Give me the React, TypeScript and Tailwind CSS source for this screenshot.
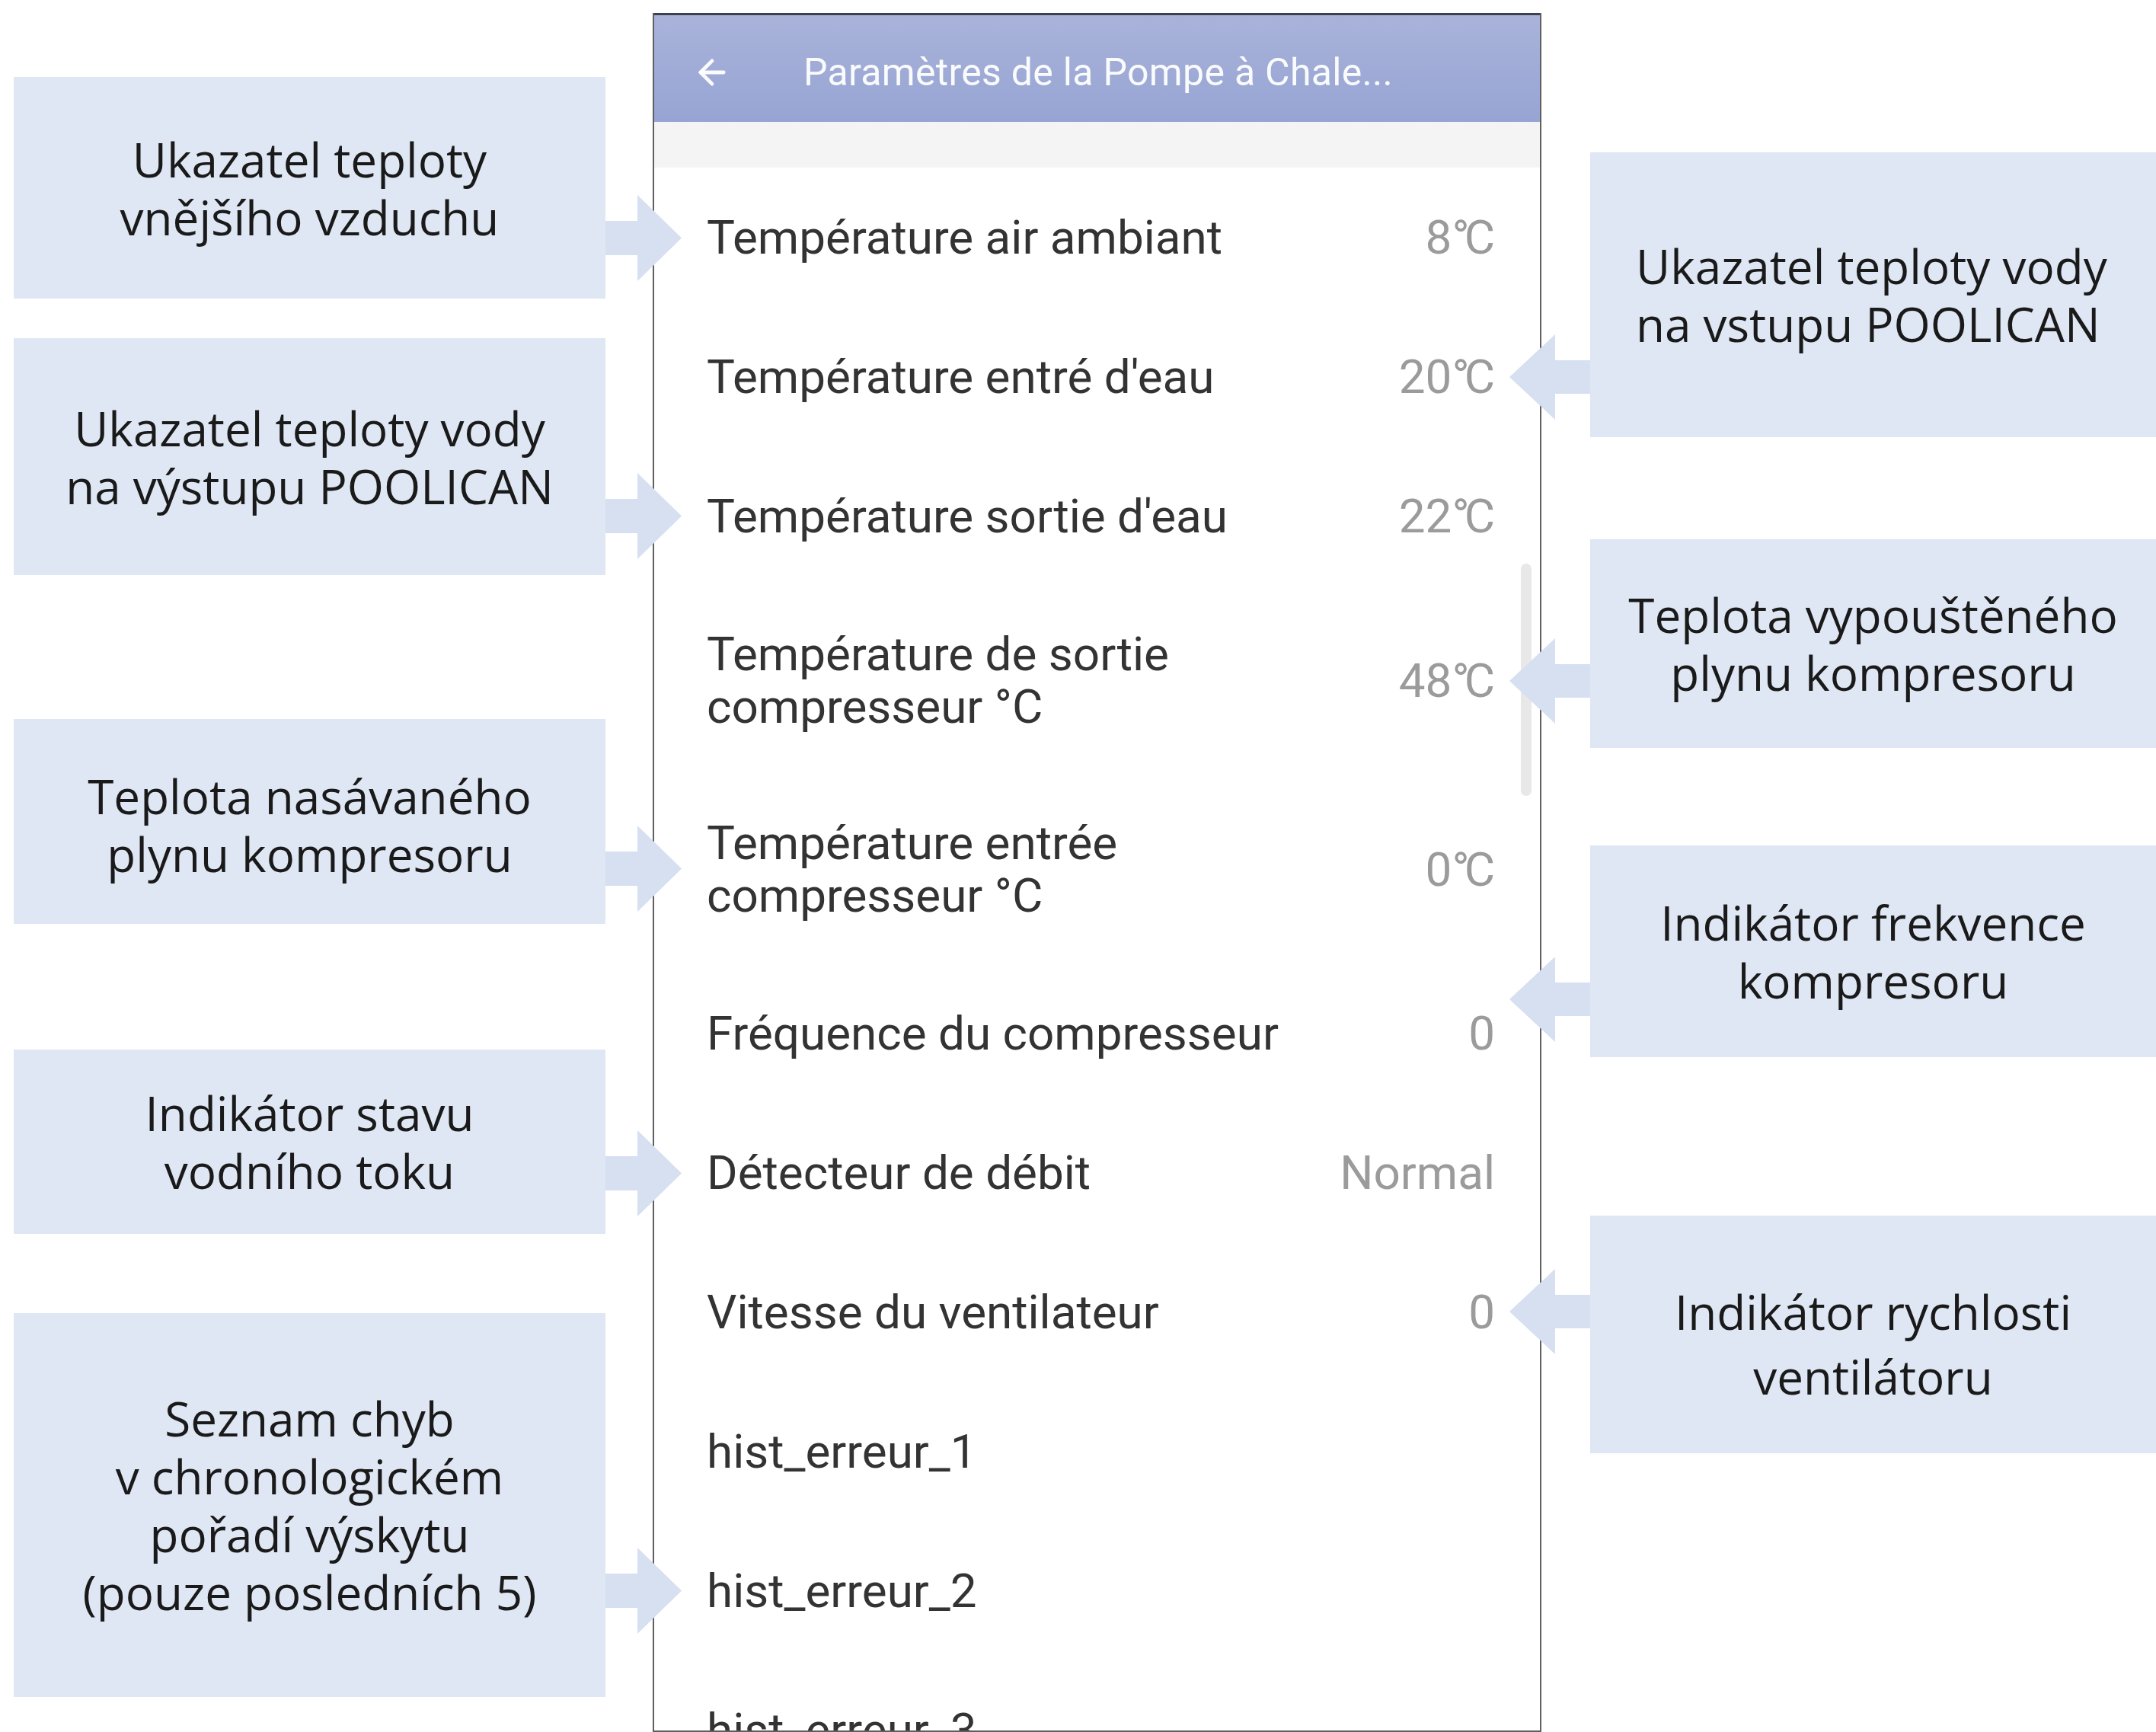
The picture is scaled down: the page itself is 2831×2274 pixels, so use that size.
import { ArrowLeft } from 'lucide-react';

type Row = { label: string[]; value?: string };

const ROWS: Row[] = [
  { label: ['Température air ambiant'], value: '8°C' },
  { label: ["Température entré d'eau"], value: '20°C' },
  { label: ["Température sortie d'eau"], value: '22°C' },
  { label: ['Température de sortie', 'compresseur °C'], value: '48°C' },
  { label: ['Température entrée', 'compresseur °C'], value: '0°C' },
  { label: ['Fréquence du compresseur'], value: '0' },
  { label: ['Détecteur de débit'], value: 'Normal' },
  { label: ['Vitesse du ventilateur'], value: '0' },
  { label: ['hist_erreur_1'] },
  { label: ['hist_erreur_2'] },
  { label: ['hist_erreur_3'] },
];

function ArrowRight() {
  return (
    <svg width="100" height="113" viewBox="0 0 100 113" className="block">
      <polygon points="0,34 42,34 42,0 100,56.5 42,113 42,79 0,79" fill="#d6e0f1" />
    </svg>
  );
}

function ArrowLeftShape() {
  return (
    <svg width="106" height="112" viewBox="0 0 106 112" className="block">
      <polygon points="106,34 60,34 60,0 0,56 60,112 60,78 106,78" fill="#d6e0f1" />
    </svg>
  );
}

function Note({ lines, className, leading = 'leading-[76px]' }: { lines: string[]; className: string; leading?: string }) {
  return (
    <div className={`relative bg-[#dfe7f4] flex flex-col items-center justify-center text-center text-[#1a1a1a] text-[62px] ${leading} ${className}`}>
      {lines.map(l => (
        <span key={l} className="whitespace-nowrap">{l}</span>
      ))}
    </div>
  );
}

function Value({ text }: { text: string }) {
  if (!text.endsWith('°C')) return <span className="text-[62px] text-[#9b9b9b]">{text}</span>;
  return (
    <span className="text-[62px] text-[#9b9b9b] whitespace-nowrap">
      {text.slice(0, -2)}
      <span className="tracking-[-7px]">°</span>C
    </span>
  );
}

export default function App() {
  return (
    <div className="w-[2831px] h-[2274px] bg-white flex overflow-hidden font-['Open_Sans',sans-serif]">
      {/* left notes */}
      <div className="relative z-10 w-[777px] ml-[18px] flex flex-col shrink-0">
        <Note className="mt-[101px] h-[291px]" lines={['Ukazatel teploty', 'vnějšího vzduchu']} />
        <div className="relative">
          <div className="absolute left-full -top-[136px]"><ArrowRight /></div>
        </div>
        <Note className="mt-[52px] h-[311px]" lines={['Ukazatel teploty vody', 'na výstupu POOLICAN']} />
        <div className="relative">
          <div className="absolute left-full -top-[134px]"><ArrowRight /></div>
        </div>
        <Note className="mt-[189px] h-[269px] pt-[8px]" lines={['Teplota nasávaného', 'plynu kompresoru']} />
        <div className="relative">
          <div className="absolute left-full -top-[129px]"><ArrowRight /></div>
        </div>
        <Note className="mt-[165px] h-[242px]" lines={['Indikátor stavu', 'vodního toku']} />
        <div className="relative">
          <div className="absolute left-full -top-[136px]"><ArrowRight /></div>
        </div>
        <Note className="mt-[104px] h-[504px]" lines={['Seznam chyb', 'v chronologickém', 'pořadí výskytu', '(pouze posledních 5)']} />
        <div className="relative">
          <div className="absolute left-full -top-[196px]"><ArrowRight /></div>
        </div>
      </div>

      {/* phone */}
      <div className="relative ml-[62px] mt-[17px] w-[1167px] h-[2257px] shrink-0 border-x-2 border-b-2 border-[#5f5f5f] bg-white overflow-hidden font-['Roboto',sans-serif]">
        <div className="h-[143px] border-t-[3px] border-[#3c4150] bg-gradient-to-b from-[#a9b3da] to-[#97a4d3] flex items-center pt-[10px] text-white/95">
          <ArrowLeft className="ml-[50px]" size={52} strokeWidth={2.2} />
          <span className="ml-[94px] text-[50px] tracking-[0.3px]">Paramètres de la Pompe à Chale...</span>
        </div>
        <div className="h-[60px] bg-[#f4f4f4]" />
        <div className="flex flex-col">
          {ROWS.map((r, i) => (
            <div
              key={i}
              className={`flex items-center justify-between pl-[69px] pr-[59px] shrink-0 ${r.label.length > 1 ? 'h-[248px]' : 'h-[183px]'}`}
            >
              <div className="flex flex-col text-[62px] leading-[69px] text-[#333333]">
                {r.label.map(l => (
                  <span key={l} className="whitespace-nowrap">{l}</span>
                ))}
              </div>
              {r.value && <Value text={r.value} />}
            </div>
          ))}
        </div>
        <div className="absolute left-[1138px] top-[723px] w-[14px] h-[305px] rounded-full bg-[#e8e8e8]" />
      </div>

      {/* right notes */}
      <div className="ml-[64px] flex-1 flex flex-col">
        <div className="relative mt-[200px] h-[374px] bg-[#dfe7f4] flex flex-col justify-center pl-[60px] text-[62px] leading-[76px] text-[#1a1a1a]">
          <span className="whitespace-nowrap">Ukazatel teploty vody</span>
          <span className="whitespace-nowrap">na vstupu POOLICAN</span>
          <div className="absolute right-full top-[239px]"><ArrowLeftShape /></div>
        </div>
        <Note className="mt-[134px] h-[274px]" lines={['Teplota vypouštěného', 'plynu kompresoru']} />
        <div className="relative">
          <div className="absolute right-full -top-[144px]"><ArrowLeftShape /></div>
        </div>
        <Note className="mt-[128px] h-[278px]" lines={['Indikátor frekvence', 'kompresoru']} />
        <div className="relative">
          <div className="absolute right-full -top-[132px]"><ArrowLeftShape /></div>
        </div>
        <Note className="mt-[208px] h-[312px] pt-[26px]" leading="leading-[85px]" lines={['Indikátor rychlosti', 'ventilátoru']} />
        <div className="relative">
          <div className="absolute right-full -top-[242px]"><ArrowLeftShape /></div>
        </div>
      </div>
    </div>
  );
}
